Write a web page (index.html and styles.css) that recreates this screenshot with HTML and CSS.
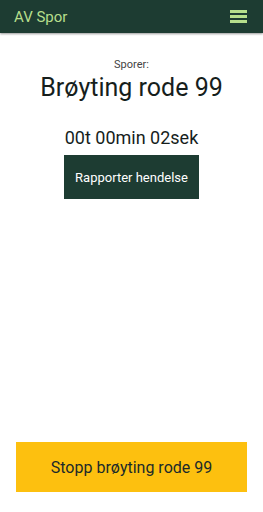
FILE: index.html
```html
<!DOCTYPE html>
<html lang="no">
<head>
    <meta charset="UTF-8">
    <meta name="viewport" content="width=device-width, initial-scale=1.0">
    <title>AV Spor</title>
    <link rel="stylesheet" href="styles.css">
</head>
<body>
    <header class="topbar">
        <span class="app-title">AV Spor</span>
        <button class="menu-btn" aria-label="Meny">
            <span></span><span></span><span></span>
        </button>
    </header>
    <main class="tracker">
        <div class="label">Sporer:</div>
        <h1 class="route">Brøyting rode 99</h1>
        <div class="timer">00t 00min 02sek</div>
        <button class="report-btn">Rapporter hendelse</button>
    </main>
    <footer class="bottom">
        <button class="stop-btn">Stopp brøyting rode 99</button>
    </footer>
</body>
</html>
```

FILE: styles.css
```css
html, body {
    margin: 0;
    height: 100%;
}
body {
    font-family: Roboto, "Noto Sans", sans-serif;
    background-color: white;
    color: #161e1c;
    display: flex;
    flex-direction: column;
}
.topbar {
    height: 33px;
    background-color: #1d3c32;
    display: flex;
    align-items: center;
    justify-content: space-between;
    padding: 0 16px 0 14px;
    box-shadow: 0 1px 2px rgba(0, 0, 0, 0.4);
}
.app-title {
    color: #b6df8c;
    font-size: 15px;
}
.menu-btn {
    background: none;
    border: none;
    padding: 0;
    width: 17px;
    display: flex;
    flex-direction: column;
    gap: 2.5px;
}
.menu-btn span {
    display: block;
    height: 2.5px;
    background-color: #b6df8c;
}
.tracker {
    flex: 1;
    display: flex;
    flex-direction: column;
    align-items: center;
    padding-top: 25px;
}
.label {
    font-size: 11px;
    color: #444;
}
.route {
    font-size: 25px;
    font-weight: normal;
    margin: 2px 0 0;
}
.timer {
    font-size: 18px;
    margin-top: 25px;
}
.report-btn {
    margin-top: 7px;
    width: 135px;
    height: 44px;
    background-color: #1d3c32;
    color: white;
    border: none;
    font-family: inherit;
    font-size: 13px;
}
.bottom {
    padding: 0 16px 20px;
}
.stop-btn {
    width: 100%;
    height: 50px;
    background-color: #fdc00f;
    color: #1a2a2a;
    border: none;
    font-family: inherit;
    font-size: 16px;
}
```
